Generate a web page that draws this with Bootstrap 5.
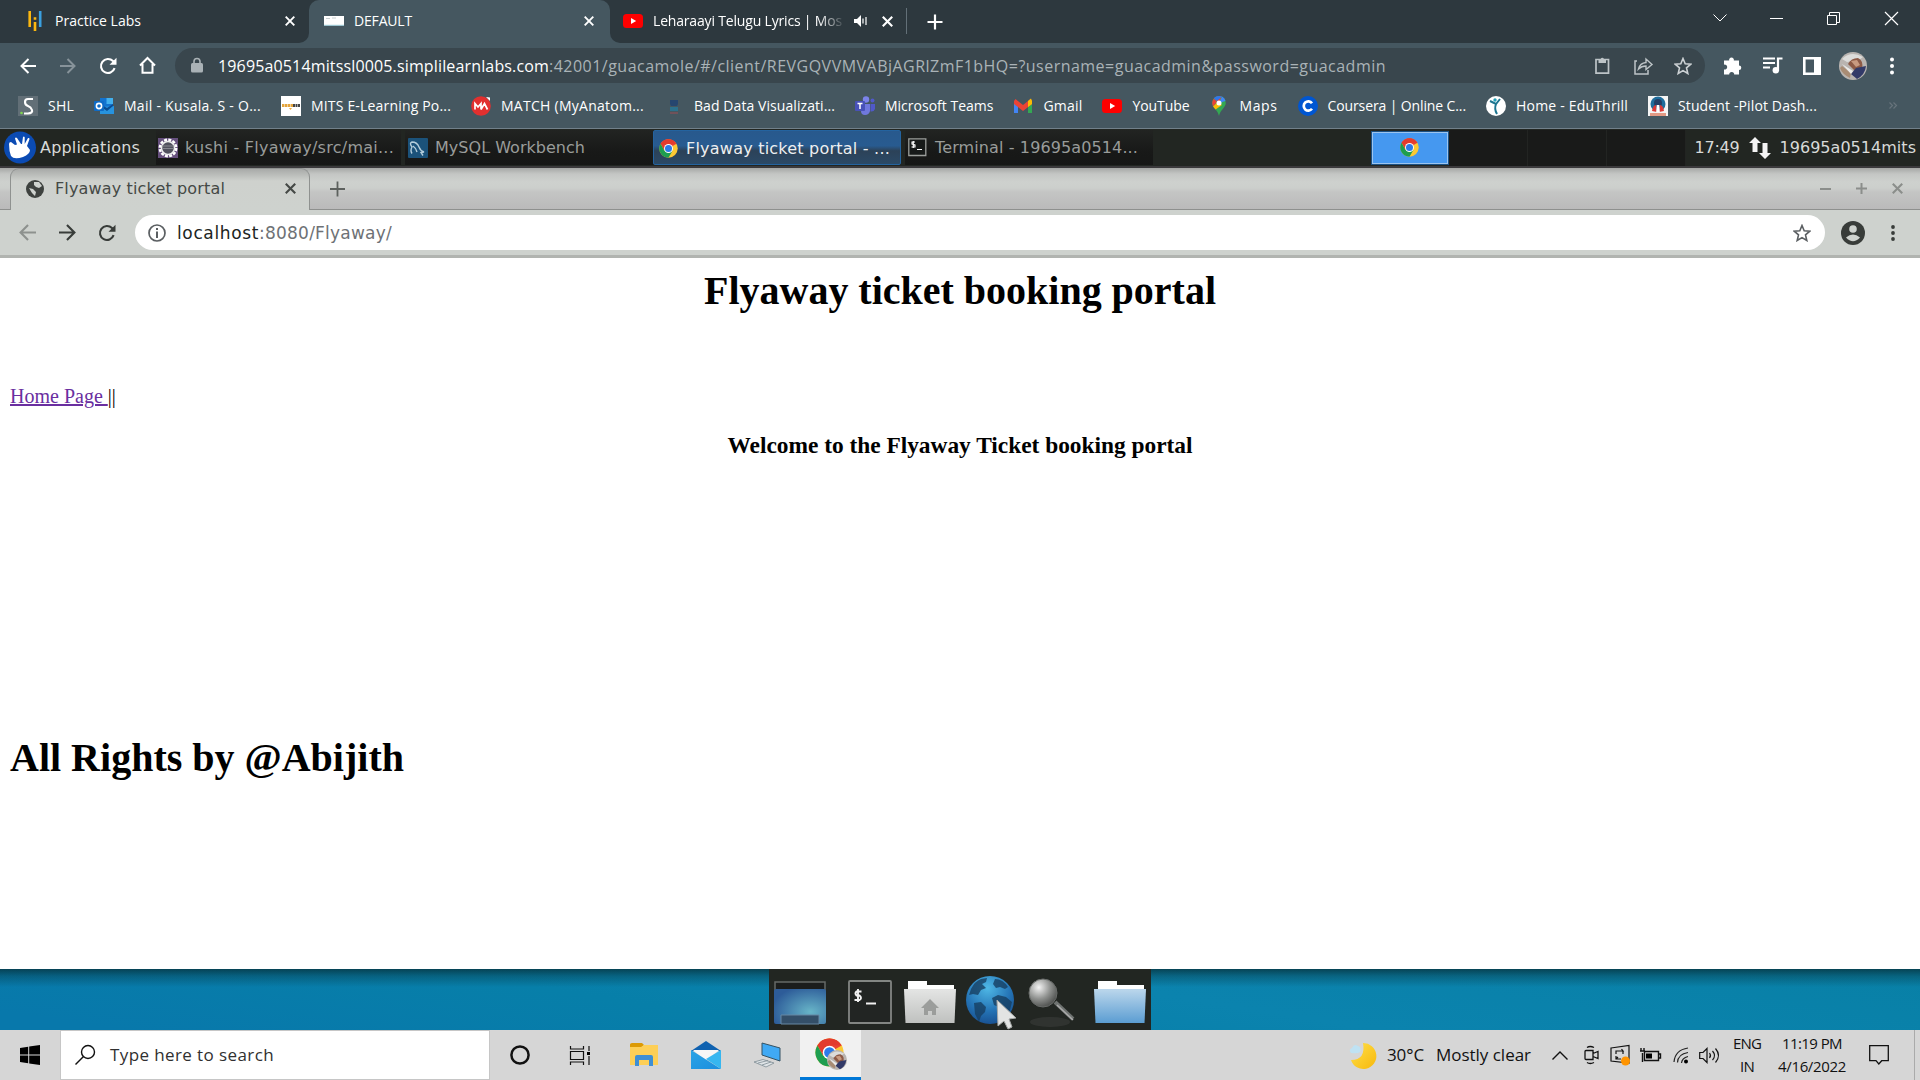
<!DOCTYPE html>
<html lang="en">
<head>
<meta charset="utf-8">
<title>Flyaway ticket portal</title>
<link href="https://cdn.jsdelivr.net/npm/bootstrap@5.3.0/dist/css/bootstrap.min.css" rel="stylesheet">
<style>
body{width:1920px;height:1080px;overflow:hidden;background:#fff;font-family:"Open Sans","Noto Sans",sans-serif;font-size:14px;line-height:20px;color:#fff}
svg{display:block;overflow:visible;flex:none}
[data-w]{display:inline-block;white-space:nowrap}
.strip{display:grid;align-items:center}
.strip>[data-w]{justify-self:start}
/* outer browser */
.tabs-outer{height:43px;background:#2d383e}
.otab{height:43px;padding-bottom:1px}
.tab-a{width:309px;padding-left:25px;border-radius:0 0 10px 0;background:#2d383e;grid-template-columns:30px 230px 20px}
.tab-b{width:301px;padding-left:15px;background:#455760;border-radius:10px 10px 0 0;grid-template-columns:30px 230px 20px}
.tab-c{width:299px;padding-left:13px;border-radius:0 0 0 10px;background:#2d383e;grid-template-columns:30px 201px 28px 24px 3px}
.tabfill{background:#455760}
.fade-label{-webkit-mask-image:linear-gradient(90deg,#000 165px,transparent 193px)}
.newtab{margin-left:13px}
.win-ctl{height:36px;grid-template-columns:57px 57px 58px 35px}
.toolbar-outer{height:45px;background:#455760;padding-left:20px;grid-template-columns:40px 39px 40px 36px 1548px 40px 40px 36px 45px 20px}
.omni{height:35px;width:1530px;border-radius:18px;background:#39464d;padding-left:16px;grid-template-columns:27px 1377px 39px 40px 20px;font-size:16px;line-height:24px;color:#aab3b7}
.bookmarks{height:41px;background:#455760;border-bottom:1px solid #71808a;padding:0 23px 5px 18px;gap:20px}
.bm{gap:10px}
/* remote desktop panel */
.panel{height:39px;background:#222622;border-bottom:2px solid #3b3a3c;font-family:"DejaVu Sans",sans-serif;font-size:16px;color:#d8dad8}
.pbtn{width:248px;height:35px;background:linear-gradient(#222422,#181918 60%,#161716);color:#999c9a;padding-left:3px;grid-template-columns:27px auto}
.pbtn.slim{width:245px;padding-left:2px}
.pbtn.on{background:linear-gradient(#28598d,#285b90 45%,#2c4258 60%,#2b4966);border:1px solid #24639f;border-radius:2px;color:#eceff1;padding-top:2px;padding-left:5px}
.pager{height:35px;margin-right:1px}
.cellp{width:79px;height:36px;background:#191a19;border-right:1px solid #222422}
.cellp.on{width:78px;height:34px;background:#4598f0;border:2px solid #9cc4ee;outline:1px solid #1d5182;outline-offset:-1px}
/* inner browser */
.inner-tabs{height:42px;font-family:"DejaVu Sans",sans-serif;font-size:16px;color:#454946;background:linear-gradient(#a5a7a5,#c4c6c4 6px,#ced1ce 14px,#cccfcc 20px,#c4c5c4 24px,#bababa);border-bottom:1px solid #8e908e}
.itab{width:300px;margin-left:10px;height:42px;margin-bottom:-1px;padding-bottom:2px;background:linear-gradient(#a8aaa8,#ced1cd 12px,#ced2ce);border:1px solid #8f9290;border-bottom:0;border-radius:9px 9px 0 0;padding-left:15px;grid-template-columns:29px 230px 12px}
.iwin{grid-template-columns:36px 36px 28px}
.inner-bar{height:48px;background:#ced2ce;border-bottom:3px solid #b1b4b0;padding-left:19px;grid-template-columns:40px 39px 37px 1706px 48px 20px}
.iomni{height:35px;width:1690px;border-radius:18px;background:#fff;padding-left:13px;grid-template-columns:29px 1616px 20px;font-family:"DejaVu Sans",sans-serif;font-size:17px;color:#6e7175}
.iomni b{font-weight:400;color:#202422}
/* web page */
.webpage{height:711px;background:#fff;color:#000;padding:9px 10px 0;font-family:"Liberation Serif",serif;font-size:20px;line-height:24px}
.webpage h1{font-size:40px;font-weight:700;line-height:48px;margin:0}
.webpage h2{font-size:23.4px;font-weight:700;line-height:28px;margin:23px 0 0}
.webpage a{color:#6a2fa0}
.webpage .nav-line{margin-top:69px}
.webpage .rights{margin-top:275px}
/* wallpaper and dock */
.wall{height:61px;background:linear-gradient(rgba(6,44,52,.72),rgba(6,44,52,.35) 7px,rgba(6,44,52,0) 18px),linear-gradient(9deg,#0878ab 5%,#077fa9 35%,#0b83ae 60%,#0880a6)}
.dock{width:382px;height:61px;background:#222622;padding-left:5px;padding-top:5px;grid-template-columns:74px 56px 62px 62px 66px 52px}
.dock .globe{margin-top:-3px}
/* host taskbar */
.host{height:50px;background:#d6d6d6;color:#1b1b1b}
.startbtn{margin:0 20px}
.searchbox{width:430px;height:50px;background:#fff;border:1px solid #c6c6c6;padding-left:14px;grid-template-columns:35px 200px;font-size:17px;color:#303030}
.apps{height:50px;padding-left:20px;grid-template-columns:60px 60px 61px 63px 46px 61px}
.apptile{height:50px;background:#f1f1f1;border-bottom:3px solid #0078d7}
.tray{height:50px;font-size:17px;grid-template-columns:37px 49px 116px 32px 26px 30px 33px 26px 34px 45px 91px 45px 6px;color:#111}
.tray .two{font-size:15px;line-height:23px}
.two.lang{width:28px}
.two.clock{width:68px}
.peek{height:50px;border-left:1px solid #aaa}
</style>
<script src="https://cdn.jsdelivr.net/npm/bootstrap@5.3.0/dist/js/bootstrap.bundle.min.js"></script>
</head>
<body class="m-0 d-flex flex-column">
<svg width="0" height="0" class="position-absolute">
<defs>
<radialGradient id="gl" cx=".45" cy=".25" r=".8"><stop offset="0" stop-color="#4fb8e6"/><stop offset=".6" stop-color="#2473b5"/><stop offset="1" stop-color="#174c8c"/></radialGradient>
<radialGradient id="dk" cx=".7" cy=".65" r=".75"><stop offset="0" stop-color="#68b5c8"/><stop offset="1" stop-color="#2d5c99"/></radialGradient>
<linearGradient id="fb" x2="0" y2="1"><stop offset="0" stop-color="#bcd7ec"/><stop offset="1" stop-color="#5b9dd2"/></linearGradient>
<linearGradient id="fg" x2="0" y2="1"><stop offset="0" stop-color="#e4e5e4"/><stop offset="1" stop-color="#bfc1bf"/></linearGradient>
<radialGradient id="lens" cx=".35" cy=".3" r=".75"><stop offset="0" stop-color="#f4f4f4"/><stop offset=".55" stop-color="#8f918f"/><stop offset="1" stop-color="#4b4d4b"/></radialGradient>
<linearGradient id="moon" x2="1" y2="1"><stop offset="0" stop-color="#ffe04a"/><stop offset="1" stop-color="#f7b80c"/></linearGradient>
<linearGradient id="ml" x2="1" y2="1"><stop offset="0" stop-color="#2aa4e6"/><stop offset="1" stop-color="#1c8ede"/></linearGradient>
<symbol id="x" viewBox="0 0 10 10"><path d="M.7.7l8.6 8.6M9.3.7L.7 9.3" stroke="currentColor" stroke-width="1.9"/></symbol>
<symbol id="back" viewBox="0 0 16 16"><path d="M16 8H1.5M8.5 1L1.5 8l7 7" fill="none" stroke="currentColor" stroke-width="2"/></symbol>
<symbol id="fwd" viewBox="0 0 16 16"><path d="M0 8h14.5M7.5 1l7 7-7 7" fill="none" stroke="currentColor" stroke-width="2"/></symbol>
<symbol id="reload" viewBox="0 0 18 18"><path d="M15.6 11.2A7 7 0 1 1 14 4.1l1.5 1.6" fill="none" stroke="currentColor" stroke-width="2.1"/><path d="M17.5.8v7h-7z" fill="currentColor"/></symbol>
<symbol id="star" viewBox="0 0 18 18"><path d="M9 1.5l2.2 5.2 5.6.5-4.3 3.7 1.3 5.6L9 13.6l-4.8 2.9 1.3-5.6L1.2 7.2l5.6-.5z" fill="none" stroke="currentColor" stroke-width="1.6"/></symbol>
<symbol id="yt" viewBox="0 0 20 14"><rect width="20" height="14" rx="3.5" fill="#f00"/><path d="M8 4l5.2 3L8 10z" fill="#fff"/></symbol>
<symbol id="chrome" viewBox="0 0 32 32"><circle cx="16" cy="16" r="15.5" fill="#fcc934"/><path d="M16 16L2.6 8.2A15.5 15.5 0 0 1 29.4 8.2z" fill="#ea4335"/><path d="M16 8h13.3A15.5 15.5 0 0 0 2.6 8.2L9 19.5z" fill="#e33b2e"/><path d="M2.6 8.2A15.5 15.5 0 0 0 16 31.5l6.8-11.8L16 23l-7-3.5z" fill="#1e9e50"/><circle cx="16" cy="16" r="7.5" fill="#fff"/><circle cx="16" cy="16" r="5.9" fill="#2c7bea"/></symbol>
<symbol id="face" viewBox="0 0 28 28"><circle cx="14" cy="14" r="14" fill="#b9b4b0"/><path d="M3 7Q12-2 24 5l-4 3-12 2z" fill="#dcdcda"/><path d="M9 12q3-6 10-6 6 3 4 11l-8 1z" fill="#8d5a46"/><path d="M12 9l6-1 3 5-4 2z" fill="#c99a80"/><path d="M17 16l10-2q-1 9-9 13l-6-5z" fill="#323a68"/><path d="M3 14l9 7-1 5Q3 22 1 16z" fill="#a88c74"/><path d="M3 12l11 7-2 3z" fill="#ecebe9"/></symbol>
</defs></svg>

<!-- host browser: tab strip -->
<div class="tabs-outer d-flex">
 <div class="tabfill d-flex"><div class="otab strip tab-a">
  <svg width="20" height="20"><path d="M4.7 0v16M10 11v9M10 6.2v2.6" stroke="#fbb710" stroke-width="2.6"/><path d="M15.2 0v16" stroke="#3aa0e0" stroke-width="2.6"/></svg>
  <span data-w="86">Practice Labs</span><svg width="10" height="10"><use href="#x"/></svg></div>
 </div>
 <div class="d-flex"><div class="otab strip tab-b"><svg width="20" height="10"><path d="M0 0h20v9.500H0z" fill="#fff"/><path d="M2 2.500h4M8 2h4" stroke="#c8ced0"/><path d="M0 9.300h20" stroke="#9ccbd8"/></svg><span data-w="58">DEFAULT</span><svg width="10" height="10"><use href="#x"/></svg></div></div>
 <div class="tabfill d-flex"><div class="otab strip tab-c"><svg width="20" height="14"><use href="#yt"/></svg><span class="fade-label"><span data-w="189">Leharaayi Telugu Lyrics | Mos</span></span>
 <svg width="14" height="12"><path d="M0 4h3l4-4v12L3 8H0z" fill="#fff"/><path d="M9 3.5v5M12 2v8" stroke="#fff" stroke-width="1.2"/></svg><svg width="11" height="11"><use href="#x"/></svg><svg width="2" height="26"><path d="M.5 0v26" stroke="#637078"/></svg></div></div>
 <svg class="newtab align-self-center me-auto" width="24" height="16" viewBox="-4 0 24 16"><path d="M0 8h15M7.5.5v15" transform="translate(1.500)" stroke="#fff" stroke-width="2.2"/></svg>
 <div class="win-ctl strip"><svg width="14" height="8"><path d="M.5.5L7 7 13.5.5" fill="none" stroke="#fff"/></svg><svg width="13" height="2"><path d="M0 1.500h13" stroke="#fff"/></svg><svg width="13" height="13"><path d="M.5 3.5h9v9h-9zM2.500 3V.5h10v10H10" fill="none" stroke="#fff"/></svg><svg width="13" height="13"><path d="M0 0l13 13M13 0L0 13" stroke="#fff" stroke-width="1.2"/></svg></div>
</div>
<!-- host browser: address row -->
<div class="toolbar-outer strip">
 <svg width="16" height="16"><use href="#back"/></svg>
 <svg width="16" height="16" color="#87939a"><use href="#fwd"/></svg>
 <svg width="18" height="18"><use href="#reload"/></svg>
 <svg width="17" height="17"><path d="M1 8.5L8.5 1 16 8.500M3.500 7v8.800h10V7" fill="none" stroke="#fff" stroke-width="2"/></svg>
 <div class="omni strip"><svg width="12" height="15"><rect y="5" width="12" height="9.500" rx="1.5" fill="#aab2b6"/><path d="M3 6V3.500a3 3 0 0 1 6 0V6" fill="none" stroke="#aab2b6" stroke-width="1.6"/></svg>
  <div class="d-flex"><span class="text-white" data-w="331">19695a0514mitssl0005.simplilearnlabs.com</span><span data-w="837">:42001/guacamole/#/client/REVGQVVMVABjAGRlZmF1bHQ=?username=guacadmin&amp;password=guacadmin</span></div>
  <svg width="15" height="17" color="#bdc4c7"><path d="M1 2.500h12.500v13.700H1z" fill="none" stroke="currentColor" stroke-width="1.7"/><path d="M3.500 2h2.200a1.700 1.700 0 0 1 3.200 0H11v4H3.500z" fill="currentColor"/></svg>
  <svg width="19" height="18" color="#bdc4c7"><path d="M3 4H1v13h13v-4" fill="none" stroke="currentColor" stroke-width="1.500"/><path d="M4.500 12Q6 6 12 5.500V2l6 5.500-6 5V9Q7.500 9 4.500 12z" fill="none" stroke="currentColor" stroke-width="1.400"/></svg>
  <svg width="18" height="18" color="#ccd1d4"><use href="#star"/></svg></div>
 <svg width="20" height="19"><path d="M1 4.500h5.200a2.400 2.400 0 1 1 4.600 0H16v5a2.300 2.300 0 1 1 0 4.600V18.500h-4.800a2.500 2.500 0 1 0-5 0H1v-5a2.500 2.500 0 1 0 0-4.800z" fill="#fff"/></svg>
 <svg width="20" height="17"><path d="M0 1.500h12M0 6h12M0 10.500h7" stroke="#fff" stroke-width="2"/><path d="M15 14V1.500h4.500" fill="none" stroke="#fff" stroke-width="2.200"/><circle cx="12.800" cy="13.300" r="3.200" fill="#fff"/></svg>
 <svg width="18" height="18"><path d="M1.300 1.300h15.400v15.400H1.300z" fill="none" stroke="#fff" stroke-width="2.600"/><path d="M11 1h6v16h-6z" fill="#fff"/></svg>
 <svg width="28" height="28"><use href="#face"/></svg>
 <svg width="16" height="18"><g fill="#fff"><circle cx="8" cy="2.500" r="2"/><circle cx="8" cy="9" r="2"/><circle cx="8" cy="15.500" r="2"/></g></svg>
</div>
<!-- bookmarks -->
<div class="bookmarks d-flex align-items-center">
 <div class="bm d-flex align-items-center"><svg width="20" height="20"><path d="M0 0h20v20H0z" fill="#626f77"/><path d="M15 3H10Q7 3 7 6t3 4 4 4-4 3.500H6" fill="none" stroke="#fff" stroke-width="2.100"/><circle cx="3.500" cy="17" r="1.300" fill="#7fd34e"/></svg><span data-w="26">SHL</span></div>
 <div class="bm d-flex align-items-center"><svg width="20" height="20"><path d="M6 2h13v16H6z" fill="#1373cf"/><path d="M12.500 2H19v6h-6.500z" fill="#42b0ee"/><path d="M6 11l14-1v8H6z" fill="#2793df"/><path d="M6 8l7 4 6-4v2l-6 5-7-5z" fill="#0b4c91"/><rect y="5" width="10" height="10" rx="1" fill="#0f6bc6"/><circle cx="5" cy="10" r="2.600" fill="none" stroke="#fff" stroke-width="1.600"/></svg><span data-w="137">Mail - Kusala. S - O...</span></div>
 <div class="bm d-flex align-items-center"><svg width="20" height="20"><path d="M0 0h20v20H0z" fill="#fff"/><path d="M1 9.500h11" stroke="#e4a53c" stroke-width="3" stroke-dasharray="2.500 .5"/><path d="M12 9.500h7" stroke="#444" stroke-width="3" stroke-dasharray="2 .5"/><path d="M8 12h3l-1.500 2z" fill="#efb03c"/></svg><span data-w="140">MITS E-Learning Po...</span></div>
 <div class="bm d-flex align-items-center"><svg width="20" height="20"><circle cx="10" cy="10" r="9.800" fill="#e2302f"/><path d="M4 13.500V7.500l3 3.500 3-3.500v6M10 13.500l3.500-6 3 6" fill="none" stroke="#fff" stroke-width="1.700"/><path d="M15 1l4 .5V5z" fill="#fff"/></svg><span data-w="143">MATCH (MyAnatom...</span></div>
 <div class="bm d-flex align-items-center"><svg width="20" height="20"><path d="M6 4h8v4l-1 2H7L6 8z" fill="#26466f"/><path d="M6 11h8v4H6z" fill="#2c718c"/><path d="M6 17h8" stroke="#70525a" stroke-width="2"/></svg><span data-w="141">Bad Data Visualizati...</span></div>
 <div class="bm d-flex align-items-center"><svg width="20" height="20"><circle cx="11" cy="3.500" r="3.200" fill="#7b83eb"/><circle cx="17.500" cy="4.500" r="2" fill="#5059c9"/><path d="M6 8h9v7q-1 4-5 4t-4-4z" fill="#7078dd"/><path d="M15.500 8H20v5q-1 3-4.500 2.500z" fill="#5059c9"/><rect y="5" width="10" height="10" rx="1" fill="#4851b8"/><path d="M2.500 7.500h5M5 7.500v5.500" stroke="#fff" stroke-width="1.500"/></svg><span data-w="108.500">Microsoft Teams</span></div>
 <div class="bm d-flex align-items-center"><svg width="20" height="20"><path d="M1 5v12h4V8z" fill="#4285f4"/><path d="M15 8v9h4V5z" fill="#34a853"/><path d="M1 5l1.500-2L10 9l7.500-6L19 5v3l-9 7-9-7z" fill="#ea4335"/><path d="M15 5l3-2.500L19 5v3l-4 3z" fill="#fbbc04"/></svg><span data-w="39">Gmail</span></div>
 <div class="bm d-flex align-items-center"><svg width="20" height="14"><use href="#yt"/></svg><span data-w="57">YouTube</span></div>
 <div class="bm d-flex align-items-center"><svg width="20" height="20"><path d="M10 0a6.800 6.800 0 0 1 6.800 7C16.800 11.500 11 14 10 20 9 14 3.200 11.500 3.200 7A6.800 6.800 0 0 1 10 0z" fill="#34a853"/><path d="M10 7L4.800 2.800Q8-1 12.500.5z" fill="#ea4335"/><path d="M10 7l3-6.500Q16 2 16.500 5z" fill="#4285f4"/><path d="M10 0Q6 0 4.800 2.800L8 5l5-4.500Q12 0 10 0z" fill="#2f77e8"/><path d="M4.800 2.800Q2 6 4 10.500L8 6z" fill="#ea4335"/><path d="M4 10.500l2.500 3L13 9 9 6z" fill="#fbbc04"/><circle cx="10" cy="7" r="2.500" fill="#fff"/></svg><span data-w="38">Maps</span></div>
 <div class="bm d-flex align-items-center"><svg width="20" height="20"><circle cx="10" cy="10" r="10" fill="#0056d2"/><path d="M14 7.200A4.600 4.600 0 1 0 14 12.800" fill="none" stroke="#fff" stroke-width="2.700"/></svg><span data-w="138.500">Coursera | Online C...</span></div>
 <div class="bm d-flex align-items-center"><svg width="20" height="20"><circle cx="10" cy="10" r="10" fill="#fff"/><path d="M4 5l6 3 4-5M10 8q-2 5 1 10" fill="none" stroke="#1c7590" stroke-width="2"/><circle cx="9" cy="4" r="1.700" fill="#22a0b8"/></svg><span data-w="112">Home - EduThrill</span></div>
 <div class="bm d-flex align-items-center"><svg width="20" height="20"><path d="M0 0h20v20H0z" fill="#f5f5f5"/><circle cx="10" cy="8" r="7.500" fill="#1f6d9c"/><circle cx="10" cy="7" r="4" fill="#243f66"/><path d="M4 15q1-6 4-6l1 7zM16 15q-1-6-4-6l-1 7z" fill="#dc3b38"/><path d="M8.700 9h2.600l.5 7H8.200z" fill="#fff"/><path d="M2 17h16v3H2z" fill="#e39b86"/></svg><span data-w="139">Student -Pilot Dash...</span></div>
 <svg class="ms-auto" width="8" height="7"><path d="M.5.5l3 3-3 3M4.500.5l3 3-3 3" fill="none" stroke="#68747c" stroke-width="1.200"/></svg>
</div>
<!-- remote desktop panel -->
<div class="panel d-flex align-items-center">
 <svg class="ms-1" width="32" height="33"><ellipse cx="16" cy="16.500" rx="16" ry="16" fill="#0b4bb3"/><path d="M5 13q0-2 2-2l4 3 2-.5-2-6q.5-1.500 2-.5l4 6h1l1-7q1-1 1.700.2V13l3.300-6q1.500-.5 1.500 1L23 15l3 4q0 4-7 7-9 3-12-1-2-5-2-12z" fill="#fff"/></svg>
 <span class="ms-1 me-3" data-w="100">Applications</span>
 <div class="pbtn slim strip"><svg width="20" height="20"><path d="M0 0h20v20H0z" fill="#66507d"/><circle cx="10" cy="10" r="8.200" fill="none" stroke="#fff" stroke-width="2.500" stroke-dasharray="3 1.300"/><circle cx="10" cy="10" r="6.500" fill="#50505d" stroke="#eee" stroke-width="1.500"/><path d="M4 8h12M4 10.500h12" stroke="#85858e"/></svg><span data-w="209">kushi - Flyaway/src/mai...</span></div>
 <div class="pbtn strip ms-1"><svg width="20" height="20"><rect width="20" height="20" rx="1" fill="#1b527a"/><path d="M4 15.500q-2-3 0-6.500Q1 5 4 4q5 0 7 5 1.500 4 5 5l-3 .5 2 3M5 8q3 2 4 6" fill="none" stroke="#b4cddb" stroke-width="1.400"/></svg><span data-w="150">MySQL Workbench</span></div>
 <div class="pbtn on strip"><svg width="19" height="19"><use href="#chrome"/></svg><span data-w="204">Flyaway ticket portal - ...</span></div>
 <div class="pbtn strip ms-1"><svg width="19" height="19"><path d="M.8.8h17v16.700H.8z" fill="#171a19" stroke="#9b9e9b" stroke-width="1.300"/><path d="M7 4H4v2l3 1v2H3.500M5.300 3v7M9 11.500h5" fill="none" stroke="#fff" stroke-width="1.100"/></svg><span data-w="203">Terminal - 19695a0514...</span></div>
 <div class="pager d-flex align-items-center ms-auto"><div class="cellp on d-flex justify-content-center align-items-center"><svg width="19" height="19"><use href="#chrome"/></svg></div><div class="cellp"></div><div class="cellp"></div><div class="cellp"></div></div>
 <span class="ms-1 me-2 ps-1" data-w="49">17:49</span>
 <svg width="24" height="22" viewBox="-1 0 24 22"><path d="M6 0l6 6H8.500v9h-5V6H0zM16 22l-6-6h3.500V6h5v10H22z" fill="#f4f4f4"/></svg>
 <span class="ms-2 me-1" data-w="136.500">19695a0514mits</span>
</div>
<!-- remote browser -->
<div class="inner-tabs d-flex align-items-center">
 <div class="itab strip align-self-start"><svg width="18" height="18"><circle cx="9" cy="9" r="9" fill="#3e423f"/><path d="M3 8l4 1 3 3-1 4-3-3zM8 2l5 0 3 4-3 2-3-1-2-2z" fill="#ced2ce"/></svg><span data-w="170">Flyaway ticket portal</span><svg width="11" height="11"><use href="#x"/></svg></div>
 <svg class="ms-3" width="24" height="16" viewBox="-4 0 24 16"><path d="M0 8h15M7.500.5v15" stroke="#5d615e" stroke-width="1.800"/></svg>
 <div class="iwin strip ms-auto"><svg width="11" height="10"><path d="M0 5h11" stroke="#8b8e8b" stroke-width="2"/></svg><svg width="11" height="11"><path d="M0 5.500h11M5.500 0v11" stroke="#8b8e8b" stroke-width="2"/></svg><svg width="11" height="11" color="#8b8e8b"><use href="#x"/></svg></div>
</div>
<div class="inner-bar strip">
 <svg width="17" height="17" color="#8d918e"><use href="#back"/></svg><svg width="17" height="17" color="#383c39"><use href="#fwd"/></svg><svg width="18" height="18" color="#383c39"><use href="#reload"/></svg>
 <div class="iomni strip"><svg width="18" height="18"><circle cx="9" cy="9" r="8" fill="none" stroke="#5b5f62" stroke-width="1.700"/><path d="M9 7.500V14M9 4v2" stroke="#5b5f62" stroke-width="2"/></svg><div class="d-flex"><b data-w="82">localhost</b><span data-w="133">:8080/Flyaway/</span></div><svg width="18" height="18" color="#5b5f62"><use href="#star"/></svg></div>
 <svg width="24" height="24"><circle cx="12" cy="12" r="12" fill="#383c39"/><circle cx="12" cy="8" r="3.800" fill="#ced2ce"/><path d="M5 16.500Q12 10.500 19 16.500 12 24 5 16.500z" fill="#ced2ce"/></svg>
 <svg width="8" height="18"><g fill="#383c39"><circle cx="4" cy="3" r="1.900"/><circle cx="4" cy="9" r="1.900"/><circle cx="4" cy="15" r="1.900"/></g></svg>
</div>
<div class="webpage">
 <h1 class="text-center"><span data-w="512">Flyaway ticket booking portal</span></h1>
 <div class="nav-line"><a href="#">Home Page </a>||</div>
 <h2 class="text-center"><span data-w="465">Welcome to the Flyaway Ticket booking portal</span></h2>
 <h1 class="rights"><span data-w="394">All Rights by @Abijith</span></h1>
</div>
<div class="wall"><div class="dock strip mx-auto">
 <svg width="52" height="43"><path d="M1 10V1h50v9" fill="#1b1d1c" stroke="#666967" stroke-width="1.500"/><rect y="8" width="52" height="35" rx="2" fill="url(#dk)"/><path d="M7 43V34h38v9z" fill="#344f68" stroke="#6688a3"/></svg>
 <svg width="44" height="44"><rect x="1" y="1" width="42" height="42" rx="1" fill="#222523" stroke="#838683" stroke-width="1.800"/><path d="M13.500 11.500H8.500q-2 2 0 4h3q3 2.500 0 4.500H6.500M10 9v13M18 23.500h10" fill="none" stroke="#f2f2f2" stroke-width="1.900"/></svg>
 <svg width="52" height="42"><path d="M4 8V0h19v4h27v6H4z" fill="#fff"/><path d="M0 8h52l-1.500 34h-49z" fill="url(#fg)"/><path d="M17 27l9-9 9 9h-3v7h-4v-4h-4v4h-4v-7z" fill="#9b9d9b"/></svg>
 <svg class="globe" width="50" height="50" viewBox="0 -1 50 50"><circle cx="24" cy="23" r="24" fill="url(#gl)"/><path d="M5 12Q9 4 15 2l6-1-1 4-4 2 4 4-5 2-3 5-5-1-4 1zM8 26l7-1 5 5-1 5-4 4-2 6-4-8zM29 2q8 0 13 8l-3 2-5-2-4 1-3-4zM26 21l6-3 8 2 6 5-2 8-5 8-3-1-1-9-7-3z" fill="#173e62" opacity=".8"/><path d="M31 23l19 18-7 1 3 8-4 2-4-8-6 5z" fill="#e3e4e3" stroke="#a6a9a8"/></svg>
 <svg width="50" height="48"><ellipse cx="22" cy="44" rx="20" ry="5" fill="#343735" opacity=".8"/><path d="M27 24l18 17" stroke="#6f7371" stroke-width="4"/><path d="M29 27l16 15" stroke="#aaa" stroke-width="1.500"/><circle cx="15" cy="15" r="14" fill="url(#lens)" stroke="#686b69"/></svg>
 <svg width="52" height="42"><path d="M4 8V0h19v4h27v6H4z" fill="#fff"/><path d="M0 8h52l-1.500 34h-49z" fill="url(#fb)"/></svg>
</div></div>
<!-- host taskbar -->
<div class="host d-flex align-items-center">
 <svg class="startbtn" width="20" height="20"><path d="M0 3l8.200-1.200v7.700H0zM9.200 1.600L20 0v9.500H9.200zM0 10.500h8.200v7.800L0 17zM9.200 10.500H20V20L9.200 18.400z"/></svg>
 <div class="searchbox strip"><svg width="20" height="20"><circle cx="13" cy="7" r="6.500" fill="none" stroke="#111" stroke-width="1.400"/><path d="M8.500 11.500L.5 19.500" stroke="#111" stroke-width="1.500"/></svg><span data-w="164">Type here to search</span></div>
 <div class="apps strip">
  <svg width="20" height="20"><circle cx="10" cy="10" r="8.600" fill="none" stroke="#111" stroke-width="2.500"/></svg>
  <svg width="20" height="19"><path d="M.5 0v3h13V0M.5 5.500h13v8H.5zM.5 19v-3h13v3M19 0v5M19 10v9" fill="none" stroke="#111" stroke-width="1.200"/><path d="M17 6h3v3h-3z"/></svg>
  <svg width="28" height="24"><path d="M0 4V1.500Q0 0 2 0h10l2 2-2 2z" fill="#dc9a05"/><path d="M0 4h11l3-2h14v20H0z" fill="#fdcf57"/><path d="M5 23V14q0-2 2-2h14q2 0 2 2v9h-4v-6H9v6z" fill="#3f8fd4"/></svg>
  <svg width="30" height="28"><path d="M0 10L15 0l15 10z" fill="#1062b0"/><path d="M2 9h26L15 20z" fill="#f6f6f6"/><path d="M0 9l30 19H0z" fill="url(#ml)"/><path d="M30 9v19L15 18z" fill="#36b6f0"/></svg>
  <svg width="28" height="27"><path d="M8 1l18 5v13L8 13z" fill="#40a9f4" stroke="#345264"/><path d="M0 20l9-2.500 11 3.500-8 4z" fill="#dfe4e7" stroke="#7d8b93" stroke-width=".8"/><path d="M4 21l10-2.500M8 23l9-3" stroke="#7d8b93" stroke-width=".8"/></svg>
  <div class="apptile d-flex justify-content-center align-items-center"><svg width="32" height="32"><use href="#chrome" width="29" height="29"/><use href="#face" x="12" y="12" width="20" height="20"/></svg></div>
 </div>
 <div class="tray strip ms-auto">
  <svg width="25" height="25"><path d="M13 0a13 13 0 1 1-12 17q15 0 12-17z" fill="url(#moon)"/><path d="M1 10q-3-3 1-5 2-5 6-2 4 1 2 6-2 2-9 1z" fill="#bfe2f3"/></svg>
  <span data-w="37">30°C</span><span data-w="95">Mostly clear</span>
  <svg width="16" height="9"><path d="M.5 8.500L8 1l7.500 7.500" fill="none" stroke="#111" stroke-width="1.400"/></svg>
  <svg width="15" height="18"><path d="M2 4.500h7v9H2q-1 0-1-1v-7q0-1 1-1zM9 7.500l5-2v7l-5-2M3 1.500Q6-.5 10 1.500M3 16.500q3 2 7 0" fill="none" stroke="#111" stroke-width="1.300"/></svg>
  <svg width="20" height="21"><path d="M1 3l18-2.500V18L1 16z" fill="none" stroke="#111" stroke-width="1.200"/><path d="M6 9V6h7l-1.500-2M13 6v3M6 11v3h5M6 14l2-2" fill="none" stroke="#111" stroke-width="1.200"/><circle cx="15.500" cy="16" r="4.500" fill="#ff9400"/></svg>
  <svg width="21" height="15"><path d="M4.500 3.500h14v9h-14zM18.500 6h2v4h-2M0 3h5M1 0v3M4 0v3M2.500 5v9" fill="none" stroke="#111" stroke-width="1.400"/><path d="M6 5.500h6v5H6z"/></svg>
  <svg width="16" height="17"><path d="M1 15Q2 3 15 1M4.500 15.500Q5 7 15 5.500M8.500 16Q9 11 15 9.500" fill="none" stroke="#222" stroke-width="1.200"/><circle cx="13" cy="14.500" r="2"/></svg>
  <svg width="21" height="17"><path d="M.7 5.500H4l4-4v14l-4-4H.7zM10.500 6q2 2.500 0 5M13.500 4q4 4.500 0 9M16.500 1.500q6 7 0 14" fill="none" stroke="#111" stroke-width="1.200"/></svg>
  <div class="two lang text-center"><div><span data-w="28">ENG</span></div><div><span data-w="14">IN</span></div></div>
  <div class="two clock text-center"><div><span data-w="60">11:19 PM</span></div><div><span data-w="68">4/16/2022</span></div></div>
  <svg width="20" height="21"><path d="M.7.700h18.600v15h-6.600L9.800 19 7 15.700H.7z" fill="none" stroke="#111" stroke-width="1.300"/></svg>
  <div class="peek"></div>
 </div>
</div>
<script>
// Spread or tighten each label's letters so that it fills its data-w width.
document.querySelectorAll('[data-w]').forEach(function(el){
  var want = +el.dataset.w, have = el.getBoundingClientRect().width;
  el.style.letterSpacing = ((want - have) / el.textContent.length).toFixed(3) + 'px';
});
</script>
</body>
</html>
